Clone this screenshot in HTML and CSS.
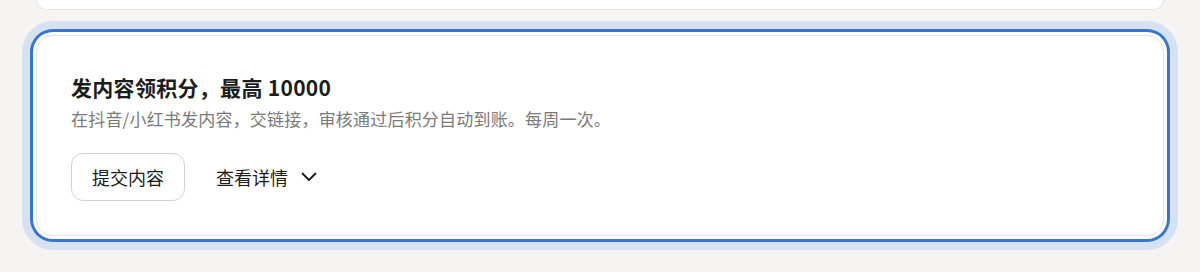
FILE: index.html
```html
<!DOCTYPE html>
<html lang="zh-CN">
<head>
<meta charset="utf-8">
<title>发内容领积分</title>
<link rel="stylesheet" href="styles.css">
</head>
<body>
<div class="page">
  <div class="prev-card"></div>
  <section class="card">
    <h2 class="title">发内容领积分，最高 10000</h2>
    <p class="desc">在抖音/小红书发内容，交链接，审核通过后积分自动到账。每周一次。</p>
    <div class="actions">
      <button class="btn" type="button">提交内容</button>
      <button class="link" type="button">查看详情
        <svg class="chev" width="16" height="10" viewBox="0 0 16 10" aria-hidden="true"><path d="M1.5 1.5 L8 8 L14.5 1.5" fill="none" stroke="#1c1c1c" stroke-width="1.8" stroke-linecap="round" stroke-linejoin="round"/></svg>
      </button>
    </div>
  </section>
</div>
</body>
</html>
```
FILE: styles.css
```css
* { box-sizing: border-box; }
html, body { margin: 0; padding: 0; }
html { background: #f5f4f2; }
body {
  background: #f5f4f2;
  min-height: 272px;
  font-family: "Noto Sans CJK SC", "Noto Sans", sans-serif;
  color: #1c1c1c;
}
.page {
  padding: 0 36px 40px;
}
.prev-card {
  height: 10px;
  background: #fff;
  border: 1px solid #e7e5e2;
  border-top: none;
  border-radius: 0 0 16px 16px;
}
.card {
  margin-top: 25px;
  background: #fff;
  border: 1px solid #e6e4e1;
  border-radius: 17px;
  padding: 37px 34px 34px;
  box-shadow: 0 0 0 3px #fff, 0 0 0 6px #3675d2, 0 0 0 14px #d6e1f2;
}
.title {
  margin: 0;
  font-size: 21px;
  line-height: 28px;
  font-weight: 600;
  letter-spacing: 0.3px;
  color: #1c1c1c;
}
.desc {
  margin: 6px 0 0;
  font-size: 17px;
  line-height: 24px;
  letter-spacing: 0.2px;
  color: #7a7a7a;
}
.actions {
  margin-top: 22px;
  display: flex;
  align-items: center;
  gap: 31px;
}
.btn {
  height: 48px;
  padding: 0 20px;
  border: 1px solid #d2d2d2;
  border-radius: 12px;
  background: #fff;
  font-family: inherit;
  font-size: 18px;
  color: #1c1c1c;
  cursor: pointer;
}
.link {
  display: flex;
  align-items: center;
  gap: 13px;
  padding: 0;
  border: none;
  background: none;
  font-family: inherit;
  font-size: 18px;
  color: #1c1c1c;
  cursor: pointer;
}
.chev { display: block; }
```
